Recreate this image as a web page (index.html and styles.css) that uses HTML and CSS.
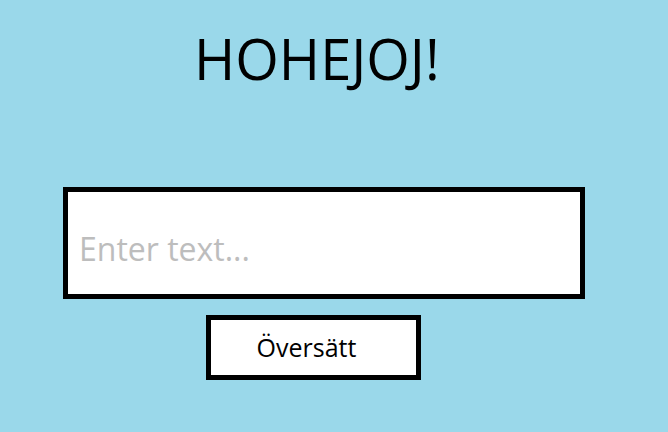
FILE: index.html
```html
<!DOCTYPE html>
<html>
<head>
<meta charset="utf-8">
<link rel="stylesheet" href="styles.css">
</head>
<body>
<main class="page">
  <h1 class="title">HOHEJOJ!</h1>
  <input class="text-input" type="text" placeholder="Enter text...">
  <button class="translate-btn" type="button">Översätt</button>
</main>
</body>
</html>
```
FILE: styles.css
```css
html, body {
  margin: 0;
  padding: 0;
  height: 100%;
}
body {
  background: #9ad8ea;
  font-family: "Open Sans", "Noto Sans", sans-serif;
  color: #000;
}
.page {
  display: flex;
  flex-direction: column;
  align-items: flex-start;
  padding-top: 30px;
}
.title {
  margin: 0 0 0 194px;
  font-size: 56px;
  font-weight: 400;
  line-height: 56px;
  letter-spacing: 0;
}
.text-input {
  box-sizing: border-box;
  margin: 101px 0 0 63px;
  width: 522px;
  height: 112px;
  border: 5px solid #000;
  background: #fff;
  padding: 10px 0 0 11px;
  font-family: "Open Sans", "Noto Sans", sans-serif;
  font-size: 32px;
  outline: none;
}
.text-input::placeholder {
  color: #bdbdbd;
  opacity: 1;
}
.translate-btn {
  box-sizing: border-box;
  margin: 16px 0 0 206px;
  width: 215px;
  height: 65px;
  border: 5px solid #000;
  background: #fff;
  font-family: "Open Sans", "Noto Sans", sans-serif;
  font-size: 25px;
  color: #000;
  padding: 0 14px 2px 0;
  border-radius: 0;
}
```
